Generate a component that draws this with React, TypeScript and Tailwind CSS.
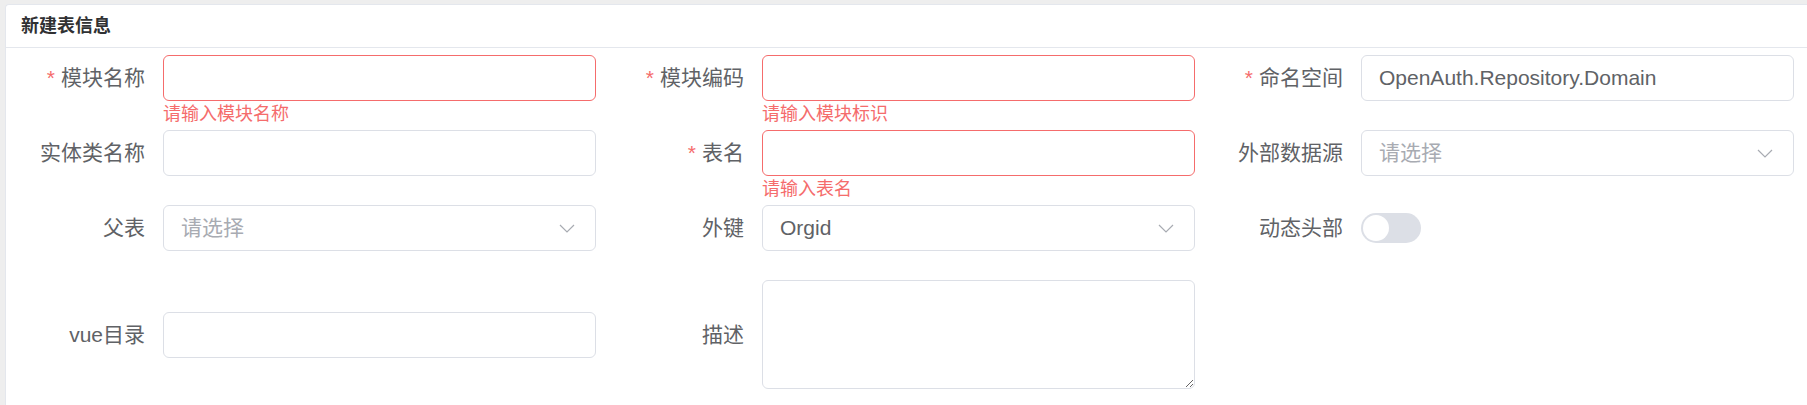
import React from "react";

const font = "font-['Liberation_Sans','Noto_Sans_CJK_SC',sans-serif]";

function Label({ text, required }: { text: string; required?: boolean }) {
  return (
    <div className="w-[157px] shrink-0 pr-[18px] text-right text-[21px] leading-[46px] text-[#606266]">
      {required && <span className="mr-[6px] text-[#f56c6c]">*</span>}
      {text}
    </div>
  );
}

function TextInput({
  value,
  error,
}: {
  value?: string;
  error?: string;
}) {
  return (
    <div className="relative w-[433px]">
      <input
        defaultValue={value}
        className={`h-[46px] w-full rounded-[6px] border bg-white pl-[17px] pr-[15px] text-[21px] text-[#606266] outline-none ${
          error ? "border-[#f56c6c]" : "border-[#dcdfe6]"
        }`}
      />
      {error && (
        <div className="absolute left-0 top-full pt-[4px] text-[18px] leading-none text-[#f56c6c]">
          {error}
        </div>
      )}
    </div>
  );
}

function Select({ value }: { value?: string }) {
  return (
    <div className="flex h-[46px] w-[433px] items-center justify-between rounded-[6px] border border-[#dcdfe6] bg-white pl-[17px] pr-[20px]">
      <span
        className={`text-[21px] ${value ? "text-[#606266]" : "text-[#a8abb2]"}`}
      >
        {value || "请选择"}
      </span>
      <svg width="16" height="9" viewBox="0 0 16 9" fill="none">
        <polyline
          points="1,1 8,8 15,1"
          stroke="#a8abb2"
          strokeWidth="1.2"
        />
      </svg>
    </div>
  );
}

function Switch() {
  return (
    <div className="relative h-[30px] w-[60px] rounded-full bg-[#dcdfe6]">
      <div className="absolute left-[2px] top-[2px] h-[26px] w-[26px] rounded-full bg-white" />
    </div>
  );
}

function Field({ children }: { children: React.ReactNode }) {
  return <div className="flex items-center">{children}</div>;
}

export default function App() {
  return (
    <div className={`h-[405px] overflow-hidden bg-[#eeeeee] pl-[5px] pt-[4px] ${font}`}>
      <div className="min-h-[420px] rounded-tl-[4px] border border-r-0 border-[#e4e7ed] bg-white">
        <div className="flex h-[43px] items-center border-b border-[#e4e7ed] px-[15px] text-[18px] font-bold text-[#303133]">
          新建表信息
        </div>
        <div className="grid grid-cols-[599px_599px_599px] gap-y-[29px] pt-[7px]">
          <Field>
            <Label text="模块名称" required />
            <TextInput error="请输入模块名称" />
          </Field>
          <Field>
            <Label text="模块编码" required />
            <TextInput error="请输入模块标识" />
          </Field>
          <Field>
            <Label text="命名空间" required />
            <TextInput value="OpenAuth.Repository.Domain" />
          </Field>

          <Field>
            <Label text="实体类名称" />
            <TextInput />
          </Field>
          <Field>
            <Label text="表名" required />
            <TextInput error="请输入表名" />
          </Field>
          <Field>
            <Label text="外部数据源" />
            <Select />
          </Field>

          <Field>
            <Label text="父表" />
            <Select />
          </Field>
          <Field>
            <Label text="外键" />
            <Select value="Orgid" />
          </Field>
          <Field>
            <Label text="动态头部" />
            <Switch />
          </Field>

          <Field>
            <Label text="vue目录" />
            <TextInput />
          </Field>
          <Field>
            <Label text="描述" />
            <textarea className="h-[109px] w-[433px] rounded-[6px] border border-[#dcdfe6] bg-white px-[17px] py-[8px] text-[21px] text-[#606266] outline-none" />
          </Field>
          <div />
        </div>
      </div>
    </div>
  );
}
